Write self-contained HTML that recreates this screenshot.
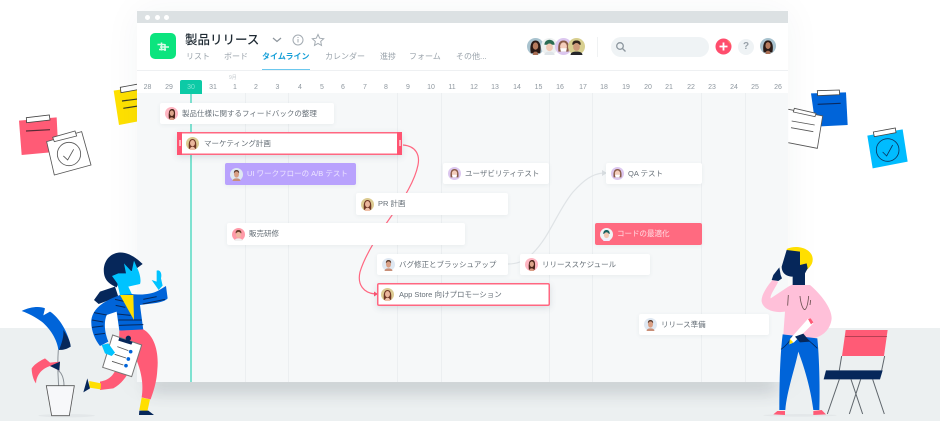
<!DOCTYPE html>
<html lang="ja">
<head>
<meta charset="utf-8">
<style>
html,body{margin:0;padding:0;background:#fff}
#root{position:relative;width:940px;height:421px;overflow:hidden;background:#fff;font-family:"Liberation Sans","Noto Sans CJK JP",sans-serif;filter:blur(.35px)}
.abs{position:absolute}
#floor{position:absolute;left:0;top:328px;width:940px;height:93px;background:#ecf0f1}
#floorshadow{position:absolute;left:150px;top:372px;width:625px;height:10px;background:#c9ced2;box-shadow:0 8px 16px 2px rgba(60,70,80,.2)}
#win{position:absolute;left:137px;top:11px;width:651px;height:371px;background:#fff;box-shadow:0 0 34px rgba(40,60,80,.05)}
#bar{position:absolute;left:0;top:0;width:651px;height:12px;background:#dce1e3}
.dot{position:absolute;top:4px;width:5px;height:5px;border-radius:50%;background:#fff}
#logo{position:absolute;left:13px;top:22px;width:26px;height:26px;border-radius:5px;background:#0be47e}
#title{position:absolute;left:48px;top:19px;font-size:12.5px;line-height:20px;font-weight:500;color:#1f2a33;white-space:nowrap}
.tab{position:absolute;top:40px;font-size:8px;line-height:12px;color:#9aa3ab;white-space:nowrap}
#tabact{color:#159fd8;font-weight:700}
#ul{position:absolute;left:125px;top:58px;width:48px;height:2px;background:#6cc8ee}
#hl{position:absolute;left:0;top:59px;width:651px;height:1px;background:#eef0f2}
#grid{position:absolute;left:0;top:82px;width:651px;height:289px;background:#f6f8f9}
.gl{position:absolute;top:0;width:1px;height:289px;background:#eceff1}
.d{position:absolute;top:72px;width:20px;margin-left:-10px;text-align:center;font-size:7px;line-height:10px;color:#8e979f}
#badge{position:absolute;left:43px;top:69px;width:22px;height:14px;background:#0ccaa6;border-radius:2px 2px 0 0;color:#7fe6d2;font-size:7px;line-height:16px;text-align:center}
#today{position:absolute;left:53px;top:82px;width:2px;height:289px;background:#7fe2d1}
.card{position:absolute;box-sizing:border-box;background:#fff;border-radius:2px;box-shadow:0 1px 4px rgba(60,80,100,.07);font-size:7.5px;color:#666f77;white-space:nowrap}
.card svg{position:absolute;left:5px;top:50%;margin-top:-6.5px;width:13px;height:13px}
.card span{position:absolute;left:22px;top:50%;margin-top:-6px;line-height:12px}
.sel{box-shadow:inset 0 0 0 1.5px #ff6781,0 2px 7px rgba(60,80,100,.16)}
.h{position:absolute;top:0;bottom:0;width:5px;background:#ff5472}
.h i{position:absolute;left:1.5px;top:8px;width:2px;height:6px;background:#ffb3c0}
</style>
</head>
<body>
<div id="root">
<svg width="0" height="0" style="position:absolute">
<defs>
<symbol id="a1" viewBox="0 0 20 20"><circle cx="10" cy="10" r="10" fill="#dccb92"/><path d="M4.500 18C3.500 10 4.500 3 10 3s6.500 7 5.500 15z" fill="#6e3524"/><ellipse cx="10" cy="9.500" rx="3.800" ry="4.800" fill="#eab69c"/><path d="M6 20c0-4 2-5 4-5s4 1 4 5z" fill="#efc0a8"/></symbol>
<symbol id="a2" viewBox="0 0 20 20"><circle cx="10" cy="10" r="10" fill="#d9c6ee"/><path d="M4 17C3 8 5 3 10 3s7 5 6 14z" fill="#6e4536"/><ellipse cx="10" cy="10" rx="3.800" ry="4.500" fill="#efc4ae"/><path d="M5 20c0-3 2-4 5-4s5 1 5 4z" fill="#eebca8"/></symbol>
<symbol id="a3" viewBox="0 0 20 20"><circle cx="10" cy="10" r="10" fill="#dfe8f2"/><path d="M6 7c0-3 2-4 4-4s4 1 4 4v1H6z" fill="#5a3d30"/><ellipse cx="10" cy="10" rx="3.800" ry="4.800" fill="#d99f84"/><path d="M4 20c0-3 3-4 6-4s6 1 6 4z" fill="#c98f78"/></symbol>
<symbol id="a4" viewBox="0 0 20 20"><circle cx="10" cy="10" r="10" fill="#ffb6c2"/><path d="M6 18C5 9 6 3 11 3s5 6 4 15z" fill="#4a2319"/><ellipse cx="10.500" cy="9.500" rx="3.200" ry="4.300" fill="#dca48a"/><path d="M7 20c0-3 1-4 3-4s4 1 4 4z" fill="#d99c84"/></symbol>
<symbol id="a5" viewBox="0 0 20 20"><circle cx="10" cy="10" r="10" fill="#ff9aa8"/><path d="M5.500 8c0-4 2-5 4.500-5s4.500 1 4.500 5z" fill="#6a3d2b"/><ellipse cx="10" cy="10.500" rx="4" ry="4.500" fill="#eeb8a0"/><path d="M4 20c0-3 3-4 6-4s6 1 6 4z" fill="#f0f0f0"/></symbol>
<symbol id="a6" viewBox="0 0 20 20"><circle cx="10" cy="10" r="10" fill="#f1f4f5"/><path d="M5 9c0-4 2-6 5-6s5 2 5 6z" fill="#17605e"/><ellipse cx="10" cy="11" rx="4" ry="4.500" fill="#f2c8b2"/><path d="M5 20c0-3 2-4 5-4s5 1 5 4z" fill="#eef"/></symbol>
<symbol id="a7" viewBox="0 0 20 20"><circle cx="10" cy="10" r="10" fill="#a9c3cf"/><path d="M4.500 18C3 10 4.500 3 10 3s7 7 5.500 15z" fill="#2a1a16"/><ellipse cx="10" cy="9.500" rx="3.200" ry="4.300" fill="#b67b5e"/><path d="M7 20c0-3 1-4 3-4s3 1 3 4z" fill="#a86e54"/></symbol>
<symbol id="a8" viewBox="0 0 20 20"><circle cx="10" cy="10" r="10" fill="#eef1f1"/><path d="M4 8c0-4 3-6 6-6s6 2 6 6z" fill="#2c6b53"/><ellipse cx="10" cy="11" rx="4" ry="4.500" fill="#f1c9b5"/><path d="M4 20c0-3 3-4 6-4s6 1 6 4z" fill="#dfe4e8"/></symbol>
<symbol id="a9" viewBox="0 0 20 20"><circle cx="10" cy="10" r="10" fill="#dcc7ef"/><path d="M4 16C3 7 5 3 10 3s7 4 6 13z" fill="#8b5c49"/><ellipse cx="10" cy="10" rx="4" ry="4.800" fill="#f4cdbb"/><path d="M6 12h8l-1 4H7z" fill="#fff"/></symbol>
<symbol id="a10" viewBox="0 0 20 20"><circle cx="10" cy="10" r="10" fill="#d8cf90"/><path d="M5 8c0-4 2-5 5-5s5 1 5 5z" fill="#33241d"/><ellipse cx="10" cy="10.500" rx="4" ry="4.600" fill="#cf9a7c"/><path d="M3 20c0-3 3-4 7-4s7 1 7 4z" fill="#25262a"/></symbol>
</defs>
</svg>

<div id="floor"></div>

<svg class="abs" style="left:0;top:0" width="940" height="421">
  <g transform="translate(0 80) scale(.3333)">
    <polygon points="341,32 420,20 420,123 357,135" fill="#ffe100"/>
    <polygon points="361,22 420,11 420,28 363,38" fill="#fff" stroke="#444" stroke-width="2.500"/>
    <path d="M366 63L420 56M370 85L420 77" stroke="#3a3a20" stroke-width="3.500" fill="none"/>
  </g>
</svg>

<div id="floorshadow"></div>

<div id="win">
  <div id="bar">
    <div class="dot" style="left:8px"></div><div class="dot" style="left:18px"></div><div class="dot" style="left:27px"></div>
  </div>
  <div id="logo">
    <svg width="26" height="26" viewBox="0 0 26 26"><path d="M7.500 11.500h7M10 14h9M9 16.500h7M11.500 9.500v8M15 11v7" stroke="#d9fbe9" stroke-width="1.500" fill="none"/></svg>
  </div>
  <div id="title">製品リリース</div>
  <svg class="abs" style="left:130px;top:17px" width="195" height="24" viewBox="0 0 195 24">
    <path d="M6 10l4 3.500 4-3.500" stroke="#8d959c" stroke-width="1.200" fill="none"/>
    <circle cx="31" cy="12" r="5" stroke="#a3abb2" stroke-width="1" fill="none"/>
    <path d="M31 11v3.500M31 9v1" stroke="#a3abb2" stroke-width="1"/>
    <path d="M51 6.500l1.700 3.700 4 .5-3 2.700.8 4-3.500-2-3.500 2 .8-4-3-2.700 4-.5z" stroke="#a3abb2" stroke-width="1" fill="none"/>
  </svg>
  <div class="tab" style="left:49px">リスト</div>
  <div class="tab" style="left:87px">ボード</div>
  <div class="tab" id="tabact" style="left:125px">タイムライン</div>
  <div class="tab" style="left:188px">カレンダー</div>
  <div class="tab" style="left:243px">進捗</div>
  <div class="tab" style="left:272px">フォーム</div>
  <div class="tab" style="left:319px">その他...</div>
  <div id="ul"></div>
  <div id="hl"></div>

  <svg class="abs" style="left:390px;top:27px" width="60" height="20" viewBox="0 0 60 20" overflow="visible">
    <use href="#a7" x="0" y="0" width="17" height="17"/>
    <use href="#a8" x="14" y="0" width="17" height="17"/>
    <use href="#a9" x="28" y="0" width="17" height="17"/>
    <use href="#a10" x="41" y="0" width="17" height="17"/>
  </svg>
  <div class="abs" style="left:460px;top:26px;width:1px;height:20px;background:#f0f2f3"></div>
  <div class="abs" style="left:474px;top:26px;width:98px;height:20px;border-radius:10px;background:#eff3f5"></div>
  <svg class="abs" style="left:478px;top:30px" width="12" height="12" viewBox="0 0 12 12"><circle cx="5" cy="5" r="3.300" stroke="#8d979f" stroke-width="1.300" fill="none"/><path d="M7.500 7.500L10.500 10.500" stroke="#8d979f" stroke-width="1.300"/></svg>
  <svg class="abs" style="left:578px;top:27px" width="17" height="17" viewBox="0 0 17 17"><circle cx="8.500" cy="8.500" r="8" fill="#ff4d6d"/><path d="M12 2a8 8 0 0 1 4 5z" fill="#ffa24d"/><path d="M8.500 4.500v8M4.500 8.500h8" stroke="#fff" stroke-width="1.800"/></svg>
  <div class="abs" style="left:601px;top:28px;width:16px;height:16px;border-radius:50%;background:#eff3f5;color:#98a1a9;font-size:10px;line-height:16px;text-align:center;font-weight:700">?</div>
  <svg class="abs" style="left:623px;top:27px" width="16" height="16"><use href="#a7" width="16" height="16"/></svg>

  <div class="abs" style="left:92px;top:64px;font-size:5px;line-height:7px;color:#c2c8cd">9月</div>

  <div class="d" style="left:10.500px">28</div><div class="d" style="left:32px">29</div><div class="d" style="left:76px">31</div><div class="d" style="left:98px">1</div><div class="d" style="left:119px">2</div><div class="d" style="left:140.500px">3</div><div class="d" style="left:163px">4</div><div class="d" style="left:185px">5</div><div class="d" style="left:206px">6</div><div class="d" style="left:228px">7</div><div class="d" style="left:249px">8</div><div class="d" style="left:271px">9</div><div class="d" style="left:294px">10</div><div class="d" style="left:315px">11</div><div class="d" style="left:337px">12</div><div class="d" style="left:358px">13</div><div class="d" style="left:380px">14</div><div class="d" style="left:401.500px">15</div><div class="d" style="left:423px">16</div><div class="d" style="left:446px">17</div><div class="d" style="left:467px">18</div><div class="d" style="left:489px">19</div><div class="d" style="left:511px">20</div><div class="d" style="left:532px">21</div><div class="d" style="left:554px">22</div><div class="d" style="left:575px">23</div><div class="d" style="left:597px">24</div><div class="d" style="left:618px">25</div><div class="d" style="left:641px">26</div>

  <div id="grid">
    <div class="gl" style="left:108px"></div><div class="gl" style="left:151px"></div><div class="gl" style="left:260px"></div><div class="gl" style="left:304px"></div><div class="gl" style="left:412px"></div><div class="gl" style="left:455px"></div><div class="gl" style="left:564px"></div><div class="gl" style="left:608px"></div>
  </div>
  <div id="today"></div>
  <div id="badge">30</div>
</div>

<svg class="abs" style="left:0;top:0" width="940" height="421">
  <path d="M403 145C416 146 420 155 418 165C415 180 405 197 390 218C378 235 365 255 360 272C357 285 364 293 375 294" stroke="#ff6781" stroke-width="1.200" fill="none"/>
  <path d="M374 291.500L378 294L374 296.500z" fill="#ff5472"/>
  <path d="M508 264C516 264 524 262 533 253C550 236 558 210 573 192C584 180 592 174 603 173" stroke="#dfe3e6" stroke-width="1.200" fill="none"/>
  <path d="M602 170L607 173L602 176z" fill="#d8dde0"/>
</svg>

<div class="card" style="left:160px;top:103px;width:174px;height:21px"><svg><use href="#a4"/></svg><span>製品仕様に関するフィードバックの整理</span></div>
<div class="card sel" style="left:177px;top:132px;width:225px;height:23px"><div class="h" style="left:0"><i></i></div><div class="h" style="right:0"><i></i></div><svg style="left:9px"><use href="#a1"/></svg><span style="left:27px">マーケティング計画</span></div>
<div class="card" style="left:225px;top:163px;width:131px;height:22px;background:#b9a2fd;color:#ece5ff"><svg><use href="#a3"/></svg><span>UI ワークフローの A/B テスト</span></div>
<div class="card" style="left:443px;top:163px;width:106px;height:21px"><svg><use href="#a9"/></svg><span>ユーザビリティテスト</span></div>
<div class="card" style="left:606px;top:163px;width:96px;height:21px"><svg><use href="#a9"/></svg><span>QA テスト</span></div>
<div class="card" style="left:356px;top:193px;width:152px;height:22px"><svg><use href="#a1"/></svg><span>PR 計画</span></div>
<div class="card" style="left:227px;top:223px;width:238px;height:22px"><svg><use href="#a5"/></svg><span>販売研修</span></div>
<div class="card" style="left:595px;top:223px;width:107px;height:22px;background:#ff6a80;color:#ffdfe4"><svg><use href="#a6"/></svg><span>コードの最適化</span></div>
<div class="card" style="left:377px;top:254px;width:131px;height:21px"><svg><use href="#a3"/></svg><span>バグ修正とブラッシュアップ</span></div>
<div class="card" style="left:520px;top:254px;width:130px;height:21px"><svg><use href="#a4"/></svg><span>リリーススケジュール</span></div>
<div class="card sel" style="left:377px;top:283px;width:173px;height:23px"><svg style="left:4px"><use href="#a1"/></svg><span>App Store 向けプロモーション</span></div>
<div class="card" style="left:639px;top:314px;width:130px;height:21px"><svg><use href="#a3"/></svg><span>リリース準備</span></div>

<svg class="abs" style="left:0;top:0" width="940" height="421">
  <g transform="translate(0 80) scale(.3333)">
    <polygon points="57,122 170,112 175,215 65,225" fill="#ff5b76"/>
    <polygon points="79,113 148,105 150,120 80,128" fill="#fff" stroke="#444" stroke-width="2.500"/>
    <path d="M78 153L150 149" stroke="#5a2a35" stroke-width="3.500"/>
    <polygon points="140,185 245,155 273,255 163,285" fill="#fff" stroke="#555" stroke-width="2.500"/>
    <polygon points="158,172 225,153 230,168 163,185" fill="#fff" stroke="#555" stroke-width="2.500"/>
    <circle cx="207" cy="222" r="35" fill="none" stroke="#555" stroke-width="2.500"/>
    <path d="M190 228L203 240L221 208" fill="none" stroke="#555" stroke-width="2.500"/>
  </g>
  <g transform="translate(780 80) scale(.3333)">
    <polygon points="93,40 198,37 203,135 107,140" fill="#0064d9"/>
    <polygon points="112,32 178,30 179,44 113,47" fill="#fff" stroke="#444" stroke-width="2.500"/>
    <path d="M113 73L182 70" stroke="#0a2a60" stroke-width="3.500"/>
    <polygon points="25,88 128,108 112,205 25,188" fill="#fff"/>
    <path d="M25 88L128 108L112 205L25 188" fill="none" stroke="#555" stroke-width="2.500"/>
    <polygon points="43,85 108,100 105,110 40,96" fill="#fff" stroke="#555" stroke-width="2.500"/>
    <path d="M35 123L104 135M33 143L100 155" stroke="#555" stroke-width="2.500"/>
    <polygon points="262,167 368,148 383,245 278,265" fill="#00bcff"/>
    <polygon points="280,156 346,144 348,158 283,170" fill="#fff" stroke="#444" stroke-width="2.500"/>
    <circle cx="323" cy="210" r="34" fill="none" stroke="#0b3560" stroke-width="2.500"/>
    <path d="M308 216L320 228L338 195" fill="none" stroke="#0b3560" stroke-width="2.500"/>
  </g>
  <g transform="translate(0 240) scale(.3333)">
    <ellipse cx="200" cy="527" rx="85" ry="5" fill="#e3e7e9"/>
    <path d="M175 330C172 370 174 410 176 437M176 392C190 405 192 425 192 437" stroke="#8b9298" stroke-width="3" fill="none"/>
    <path d="M65 213C90 200 120 198 135 205L130 226L150 215C178 232 206 280 212 320L175 330C172 300 150 265 125 245C105 230 85 220 65 213z" fill="#0064d9"/>
    <path d="M190 270C205 290 212 310 212 320C200 328 190 330 177 330C185 310 192 290 190 270z" fill="#06275a"/>
    <path d="M95 385C105 370 125 360 135 355L150 368L180 365L178 392L150 378C130 385 110 400 108 430C100 420 95 400 95 385z" fill="#ff5b76"/>
    <path d="M150 378L180 365L178 392z" fill="#06275a"/>
    <polygon points="139,437 223,437 208,527 155,527" fill="#f7f8fa" stroke="#555" stroke-width="2.500"/>

    <path d="M345 140L300 155L282 180L296 192L355 170z" fill="#06275a"/>
    <path d="M428 72C400 45 375 35 355 38C325 42 308 70 312 100C315 125 335 135 350 142L365 110L410 85z" fill="#06275a"/>
    <path d="M355 100L378 100L372 70L395 95L402 62L412 85C420 100 424 122 420 132L385 140L397 165L360 165L352 130L336 108z" fill="#00c3ff"/>
    <path d="M360 165C320 180 280 200 274 240C272 270 285 300 300 318L325 305C315 280 310 250 320 225L350 215L358 272L430 270L420 195C450 190 490 190 503 175L498 138L475 152C450 165 420 165 395 162z" fill="#0064d9"/>
    <path d="M345 178L372 184M347 196L376 202M352 222L392 226M355 240L425 240M357 256L430 254M282 218L320 225M276 240L310 246M276 262L310 258M284 284L315 280M430 178L470 170M428 192L495 178" stroke="#06275a" stroke-width="3" fill="none"/>
    <path d="M360 165L400 165L402 240z" fill="#ffdf00"/>
    <path d="M470 92C480 88 487 100 483 115L488 137L476 150L455 120L470 125z" fill="#00c3ff"/>
    <path d="M358 272L430 268C460 285 478 330 472 390C470 430 458 460 452 478L425 472C430 440 428 400 405 350C395 390 370 430 340 445L300 450L300 425C330 420 350 400 355 360z" fill="#ff5b76"/>
    <path d="M268 423L303 430L302 448L268 443zM425 473L450 478L442 515L418 510z" fill="#ffdf00"/>
    <path d="M262 415L270 445L250 457zM418 512L445 512L462 525L417 525z" fill="#06275a"/>
    <polygon points="338,285 425,315 395,410 308,382" fill="#fff" stroke="#777" stroke-width="3"/>
    <path d="M358 293C370 298 385 300 398 306L394 314L355 302z" fill="#06275a"/>
    <circle cx="385" cy="295" r="8" fill="#06275a"/>
    <path d="M352 320L385 332M344 343L378 354M336 364L370 375" stroke="#555" stroke-width="2.500"/>
    <circle cx="392" cy="335" r="5.500" fill="#0064d9"/><circle cx="385" cy="357" r="5.500" fill="#0064d9"/><circle cx="378" cy="377" r="5.500" fill="#0064d9"/>
    <path d="M305 315L325 310L345 338L335 348L315 340z" fill="#00c3ff"/>
  </g>
  <g transform="translate(740 235) scale(.3333)">
    <ellipse cx="180" cy="541" rx="110" ry="4" fill="#e3e7e9"/>
    <path d="M305 363L298 406M434 363L425 406M298 433L262 537M333 433L368 537M362 433L328 537M398 433L433 537" stroke="#5f666c" stroke-width="3"/>
    <polygon points="317,285 443,285 432,363 306,363" fill="#ff5b76"/>
    <path d="M316 304L441 304" stroke="#8a3040" stroke-width="2"/>
    <polygon points="258,406 428,406 420,433 251,433" fill="#06275a"/>
    <path d="M140 42C170 28 215 40 218 70C220 90 205 100 195 110L150 90z" fill="#ffdf00"/>
    <path d="M97 135L115 140C105 160 90 180 92 190L145 155L158 148L195 150L210 150C245 180 275 220 275 250C272 285 245 305 220 310L130 298L135 230C105 235 70 225 65 200C62 180 85 150 97 135z" fill="#ffc0d9"/>
    <path d="M140 45L180 50L180 90L200 85L203 100L195 115L195 150L158 150L158 125C140 125 125 115 125 95z" fill="#06275a"/>
    <path d="M118 97L122 120L126 130L115 138L95 135L100 120z" fill="#06275a"/>
    <path d="M180 183C182 205 188 222 194 224C200 222 204 205 206 183" fill="none" stroke="#6a5050" stroke-width="2.500"/>
    <path d="M145 180L143 212M212 195L210 210" stroke="#6a5050" stroke-width="2.500"/>
    <path d="M128 298L232 310C238 370 240 460 238 525L220 525C210 450 190 390 175 350C165 400 140 470 136 525L118 525C118 450 120 360 128 298z" fill="#0064d9"/>
    <path d="M123 343C135 335 150 320 155 305M232 340C222 330 212 322 205 315" stroke="#06275a" stroke-width="2.500" fill="none"/>
    <path d="M100 538L112 528L135 528L135 540zM220 528L245 525L258 538L220 540z" fill="#ff5b76"/>
    <path d="M205 250L220 265L162 322L148 328L150 312z" fill="#fff"/>
    <path d="M204 252L212 250L220 262L213 268z" fill="#ff5b76"/>
    <path d="M148 328L150 312L160 322z" fill="#ffdf00"/>
    <path d="M165 305L190 296L210 320L180 322z" fill="#06275a"/>
  </g>
</svg>
</div>
</body>
</html>
